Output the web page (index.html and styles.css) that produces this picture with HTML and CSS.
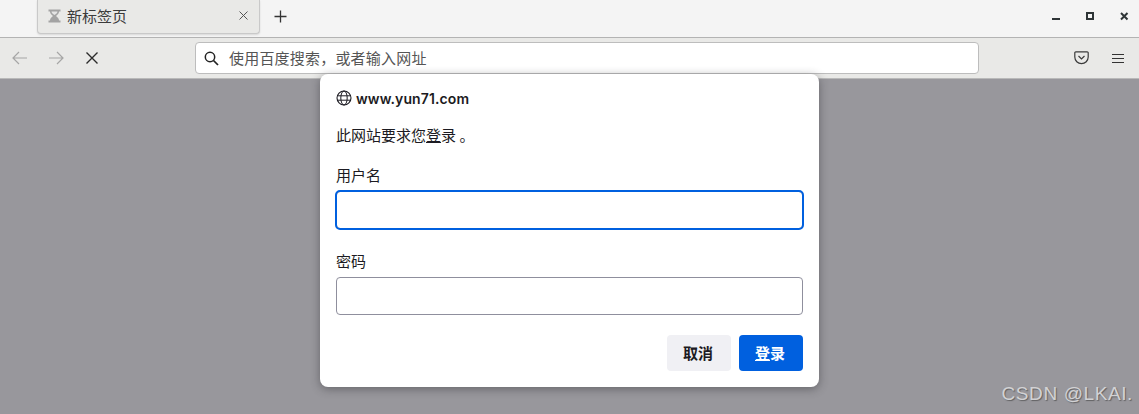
FILE: index.html
```html
<!DOCTYPE html>
<html>

<head>
    <meta charset="UTF-8" />
    <title>新标签页</title>
    <link rel="stylesheet" href="styles.css">
</head>

<body>
    <div class="titlebar">
        <div class="tab">
            <svg class="hourglass" width="13" height="14" viewBox="0 0 13 14">
                <path d="M0.5 0.5h12v2h-1.5c0 2-1.5 3.3-3 4.500c1.500 1.200 3 2.500 3 4.500h1.500v2h-12v-2h1.500c0-2 1.500-3.300 3-4.500c-1.500-1.200-3-2.500-3-4.500h-1.500z" fill="#a3a3a3" />
                <path d="M3.500 2.500h6c0 1.500-1.500 2.700-3 3.600c-1.500-0.900-3-2.100-3-3.600z" fill="#e4e4e4" />
            </svg>
            <span class="tabTitle">新标签页</span>
            <svg class="tabClose" width="9" height="9" viewBox="0 0 9 9">
                <path d="M0.5 0.500l8 8M8.500 0.500l-8 8" stroke="#555" stroke-width="1" fill="none" />
            </svg>
        </div>
        <svg class="newTab" width="13" height="13" viewBox="0 0 13 13">
            <path d="M6.500 0.500v12M0.500 6.500h12" stroke="#333" stroke-width="1.300" fill="none" />
        </svg>
        <div class="windowButtons">
            <svg width="9" height="9" viewBox="0 0 9 9"><rect x="0" y="6" width="8" height="2" fill="#2e3436" /></svg>
            <svg width="9" height="9" viewBox="0 0 9 9"><rect x="1" y="1" width="6" height="6" fill="none" stroke="#2e3436" stroke-width="2" /></svg>
            <svg width="9" height="9" viewBox="0 0 9 9"><path d="M1 1l6.500 6.500M7.500 1l-6.500 6.500" stroke="#2e3436" stroke-width="2" fill="none" /></svg>
        </div>
    </div>

    <div class="toolbar">
        <svg class="navIcon" width="16" height="14" viewBox="0 0 16 14">
            <path d="M15 7H1M7 1L1 7l6 6" stroke="#a6a6a6" stroke-width="1.200" fill="none" />
        </svg>
        <svg class="navIcon" width="16" height="14" viewBox="0 0 16 14">
            <path d="M1 7h14M9 1l6 6l-6 6" stroke="#a6a6a6" stroke-width="1.200" fill="none" />
        </svg>
        <svg class="navIcon" width="12" height="12" viewBox="0 0 12 12">
            <path d="M0.500 0.500l11 11M11.500 0.500l-11 11" stroke="#2b2b2b" stroke-width="1.400" fill="none" />
        </svg>
        <div class="urlbar">
            <svg width="15" height="15" viewBox="0 0 15 15">
                <circle cx="6" cy="6" r="4.700" stroke="#222" stroke-width="1.500" fill="none" />
                <path d="M9.500 9.500l4.500 4.500" stroke="#222" stroke-width="1.700" fill="none" />
            </svg>
            <span class="urlText">使用百度搜索，或者输入网址</span>
        </div>
        <svg class="pocket" width="15" height="14" viewBox="0 0 15 14">
            <path d="M1.800 0.800h11.400a1 1 0 0 1 1 1v4.200a6.700 6.700 0 0 1-13.400 0v-4.200a1 1 0 0 1 1-1z" stroke="#3a3a3a" stroke-width="1.200" fill="none" />
            <path d="M4.500 5l3 3l3-3" stroke="#3a3a3a" stroke-width="1.200" fill="none" />
        </svg>
        <svg class="menu" width="12" height="11" viewBox="0 0 12 11">
            <path d="M0 1.500h12M0 5.500h12M0 9.500h12" stroke="#333" stroke-width="1.200" fill="none" />
        </svg>
    </div>

    <div class="content">
        <div class="dialog">
            <div class="siteRow">
                <svg width="16" height="16" viewBox="0 0 16 16">
                    <circle cx="8" cy="8" r="7" stroke="#1c1b22" stroke-width="1.100" fill="none" />
                    <ellipse cx="8" cy="8" rx="3.200" ry="7" stroke="#1c1b22" stroke-width="1" fill="none" />
                    <path d="M1 5.800h14M1 10.200h14" stroke="#1c1b22" stroke-width="1" fill="none" />
                </svg>
                <span class="siteName">www.yun71.com</span>
            </div>
            <div class="message">此网站要求您<span class="accessKey">登</span>录 。</div>
            <label class="fieldLabel">用户名</label>
            <div class="field focused"></div>
            <label class="fieldLabel second">密码</label>
            <div class="field"></div>
            <div class="buttons">
                <div class="button">取消</div>
                <div class="button primary"><span class="accessKey">登</span>录</div>
            </div>
        </div>
        <div class="watermark">CSDN @LKAI.</div>
    </div>
</body>

</html>
```

FILE: styles.css
```css
html, body {
    margin: 0;
    height: 100%;
    overflow: hidden;
}

body {
    display: flex;
    flex-direction: column;
    font-family: "Noto Sans CJK SC", "Liberation Sans", sans-serif;
    color: #1c1b22;
}

.titlebar {
    height: 37px;
    display: flex;
    align-items: flex-start;
    padding-left: 37px;
    background-color: #f4f4f4;
    border-bottom: 1px solid #b3b3b3;
}

.tab {
    box-sizing: border-box;
    width: 223px;
    height: 34px;
    display: flex;
    align-items: center;
    padding: 0 11px 2px 10px;
    background-color: #e9e9e7;
    border: 1px solid #c9c9c9;
    border-top: none;
    border-radius: 0 0 4px 4px;
    box-shadow: 0 1px 2px rgba(0, 0, 0, 0.12);
}

.tabTitle {
    flex: 1;
    margin-left: 6px;
    font-size: 15px;
    color: #3b3b3b;
}

.newTab {
    margin: 10px 0 0 14px;
}

.windowButtons {
    margin-left: auto;
    margin-right: 10px;
    margin-top: 12px;
    display: flex;
    gap: 25px;
}

.toolbar {
    height: 40px;
    display: flex;
    align-items: center;
    padding-left: 12px;
    background-color: #e9e9e7;
    border-bottom: 1px solid #b9b9b9;
}

.navIcon {
    margin-right: 20px;
}

.navIcon:nth-child(3) {
    margin-left: 2px;
    margin-right: 0;
}

.urlbar {
    box-sizing: border-box;
    width: 784px;
    height: 32px;
    margin-left: 97px;
    display: flex;
    align-items: center;
    padding-left: 8px;
    background-color: #fff;
    border: 1px solid #bdbdbd;
    border-radius: 4px;
}

.urlText {
    margin-left: 10px;
    padding-bottom: 2px;
    font-size: 15px;
    color: #555;
    letter-spacing: 0.2px;
}

.pocket {
    margin-left: 95px;
}

.menu {
    margin-left: 23px;
}

.content {
    flex: 1;
    position: relative;
    background-color: #98979c;
}

.dialog {
    box-sizing: border-box;
    position: absolute;
    left: 320px;
    top: -5px;
    width: 499px;
    height: 313px;
    padding: 15px 16px 0;
    background-color: #fff;
    border-radius: 8px;
    box-shadow: 0 2px 10px rgba(40, 40, 45, 0.45);
}

.siteRow {
    display: flex;
    align-items: center;
    gap: 4px;
    height: 18px;
}

.siteName {
    font-family: "Inter", "Liberation Sans", sans-serif;
    font-size: 14px;
    font-weight: 600;
    letter-spacing: 0.1px;
}

.message {
    margin-top: 18px;
    height: 20px;
    line-height: 20px;
    font-size: 15px;
}

.accessKey {
    text-decoration: underline;
}

.fieldLabel {
    display: block;
    margin-top: 20px;
    height: 20px;
    line-height: 20px;
    font-size: 15px;
}

.fieldLabel.second {
    margin-top: 22px;
}

.field {
    box-sizing: border-box;
    height: 38px;
    margin-top: 6px;
    background-color: #fff;
    border: 1px solid #8f8f9d;
    border-radius: 4px;
}

.field.focused {
    outline: 2px solid #0060df;
    outline-offset: -1px;
}

.buttons {
    display: flex;
    justify-content: flex-end;
    gap: 8px;
    margin-top: 20px;
}

.button {
    box-sizing: border-box;
    width: 64px;
    height: 36px;
    display: flex;
    justify-content: center;
    align-items: center;
    padding: 0 2px 2px 0;
    font-size: 15px;
    font-weight: 700;
    background-color: #f0f0f4;
    border-radius: 4px;
}

.button.primary {
    background-color: #0060df;
    color: #fff;
}

.watermark {
    position: absolute;
    right: 6px;
    bottom: 9px;
    font-family: "Liberation Sans", sans-serif;
    font-size: 19px;
    letter-spacing: 0.6px;
    line-height: 22px;
    color: #d2d2d4;
    text-shadow: 1px 1px 1px rgba(60, 60, 60, 0.6);
}
```
